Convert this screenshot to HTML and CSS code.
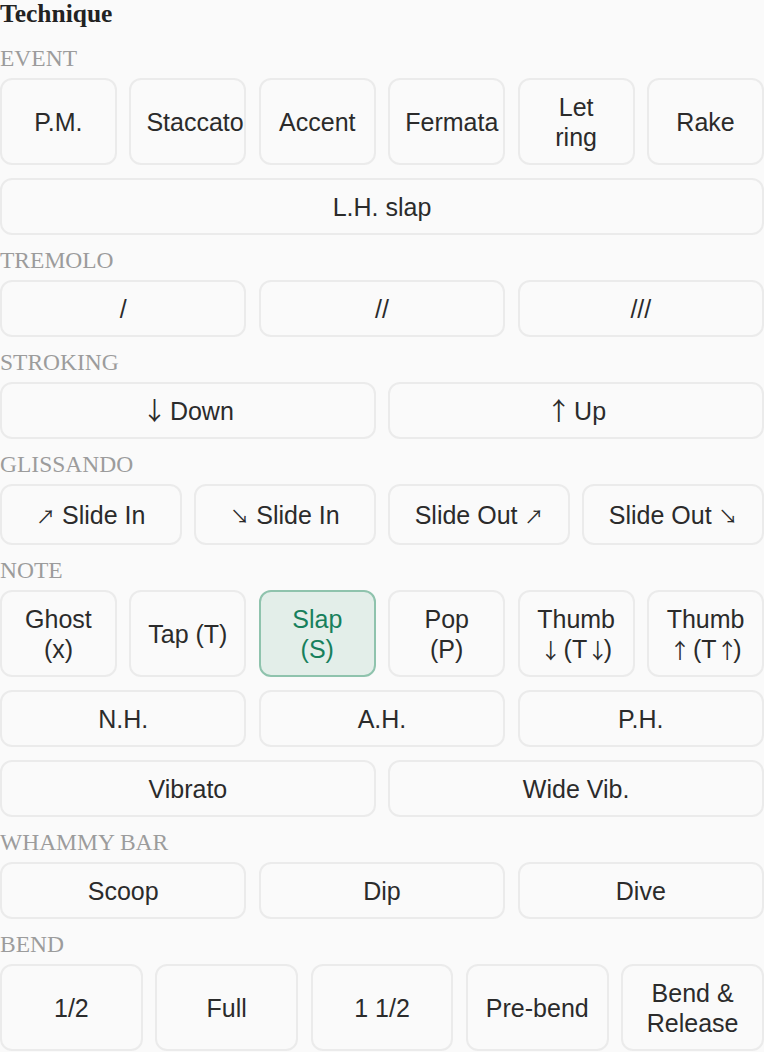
FILE: index.html
```html
<!DOCTYPE html>
<html lang="en">
<head>
    <meta charset="UTF-8">
    <meta name="viewport" content="width=device-width, initial-scale=1.0">
    <title>Technique</title>
    <link rel="stylesheet" href="styles.css">
</head>
<body>

    <div class="panel">
        <h3 class="panel-title">Technique</h3>

        <!-- Event -->
        <section class="group">
            <div class="group-label">Event</div>
            <div class="btn-grid cols-6">
                <button class="btn">P.M.</button>
                <button class="btn">Staccato</button>
                <button class="btn">Accent</button>
                <button class="btn">Fermata</button>
                <button class="btn">Let ring</button>
                <button class="btn">Rake</button>
            </div>
            <div class="btn-grid cols-1">
                <button class="btn">L.H. slap</button>
            </div>
        </section>

        <!-- Tremolo -->
        <section class="group">
            <div class="group-label">Tremolo</div>
            <div class="btn-grid cols-3">
                <button class="btn">/</button>
                <button class="btn">//</button>
                <button class="btn">///</button>
            </div>
        </section>

        <!-- Stroking -->
        <section class="group">
            <div class="group-label">Stroking</div>
            <div class="btn-grid cols-2">
                <button class="btn"><span class="arrow">↓</span> Down</button>
                <button class="btn"><span class="arrow">↑</span> Up</button>
            </div>
        </section>

        <!-- Glissando -->
        <section class="group">
            <div class="group-label">Glissando</div>
            <div class="btn-grid cols-4 tall">
                <button class="btn"><span class="arrow diag">↗</span> Slide In</button>
                <button class="btn"><span class="arrow diag">↘</span> Slide In</button>
                <button class="btn">Slide Out <span class="arrow diag">↗</span></button>
                <button class="btn">Slide Out <span class="arrow diag">↘</span></button>
            </div>
        </section>

        <!-- Note -->
        <section class="group">
            <div class="group-label">Note</div>
            <div class="btn-grid cols-6">
                <button class="btn">Ghost (x)</button>
                <button class="btn">Tap (T)</button>
                <button class="btn active">Slap (S)</button>
                <button class="btn">Pop (P)</button>
                <button class="btn">Thumb <span class="arrow small">↓</span> (T<span class="arrow small">↓</span>)</button>
                <button class="btn">Thumb <span class="arrow small">↑</span> (T<span class="arrow small">↑</span>)</button>
            </div>
            <div class="btn-grid cols-3">
                <button class="btn">N.H.</button>
                <button class="btn">A.H.</button>
                <button class="btn">P.H.</button>
            </div>
            <div class="btn-grid cols-2">
                <button class="btn">Vibrato</button>
                <button class="btn">Wide Vib.</button>
            </div>
        </section>

        <!-- Whammy bar -->
        <section class="group">
            <div class="group-label">Whammy bar</div>
            <div class="btn-grid cols-3">
                <button class="btn">Scoop</button>
                <button class="btn">Dip</button>
                <button class="btn">Dive</button>
            </div>
        </section>

        <!-- Bend -->
        <section class="group">
            <div class="group-label">Bend</div>
            <div class="btn-grid cols-5">
                <button class="btn">1/2</button>
                <button class="btn">Full</button>
                <button class="btn">1 1/2</button>
                <button class="btn">Pre-bend</button>
                <button class="btn">Bend &amp; Release</button>
            </div>
        </section>
    </div>

</body>
</html>
```

FILE: styles.css
```css
body {
    margin: 0;
    padding: 0;
    background: #fafafa;
    font-family: "Liberation Serif", "Times New Roman", serif;
    color: #2b2b2b;
}

.panel {
    display: flex;
    flex-direction: column;
}

.panel-title {
    margin: 0 0 5px;
    font-size: 25.5px;
    font-weight: bold;
    line-height: 28px;
    color: #222;
}

/* セクション */
.group {
    display: flex;
    flex-direction: column;
    gap: 13px;
    margin-top: 11.5px;
}

.group-label {
    font-size: 23.5px;
    line-height: 27px;
    text-transform: uppercase;
    color: #9c9c9c;
    margin-bottom: -6.5px;
}

.btn-grid {
    display: grid;
    gap: 12.5px;
}

.cols-1 { grid-template-columns: 1fr; }
.cols-2 { grid-template-columns: repeat(2, 1fr); }
.cols-3 { grid-template-columns: repeat(3, 1fr); }
.cols-4 { grid-template-columns: repeat(4, 1fr); }
.cols-5 { grid-template-columns: repeat(5, 1fr); }
.cols-6 { grid-template-columns: repeat(6, 1fr); }

.btn {
    min-width: 0;
    font-family: "Liberation Sans", Arial, sans-serif;
    font-size: 25px;
    line-height: 30px;
    color: #2b2b2b;
    background: #fafafa;
    border: 2px solid #ebebeb;
    border-radius: 12px;
    padding: 11.5px 15px;
    text-align: center;
    cursor: pointer;
}

/* 細い矢印 (全角グリフなので字送りを詰める) */
.arrow {
    font-family: "Noto Sans CJK JP", "DejaVu Sans", sans-serif;
    line-height: 1;
    letter-spacing: -4px;
}

.arrow.small {
    font-size: 21px;
    letter-spacing: -4.5px;
}

.arrow.diag {
    font-size: 19px;
    letter-spacing: 0;
}

.tall .btn {
    padding-top: 13.5px;
    padding-bottom: 13.5px;
}

.btn.active {
    background: #e3eee9;
    border-color: #8fc3ad;
    color: #17805c;
}
```
